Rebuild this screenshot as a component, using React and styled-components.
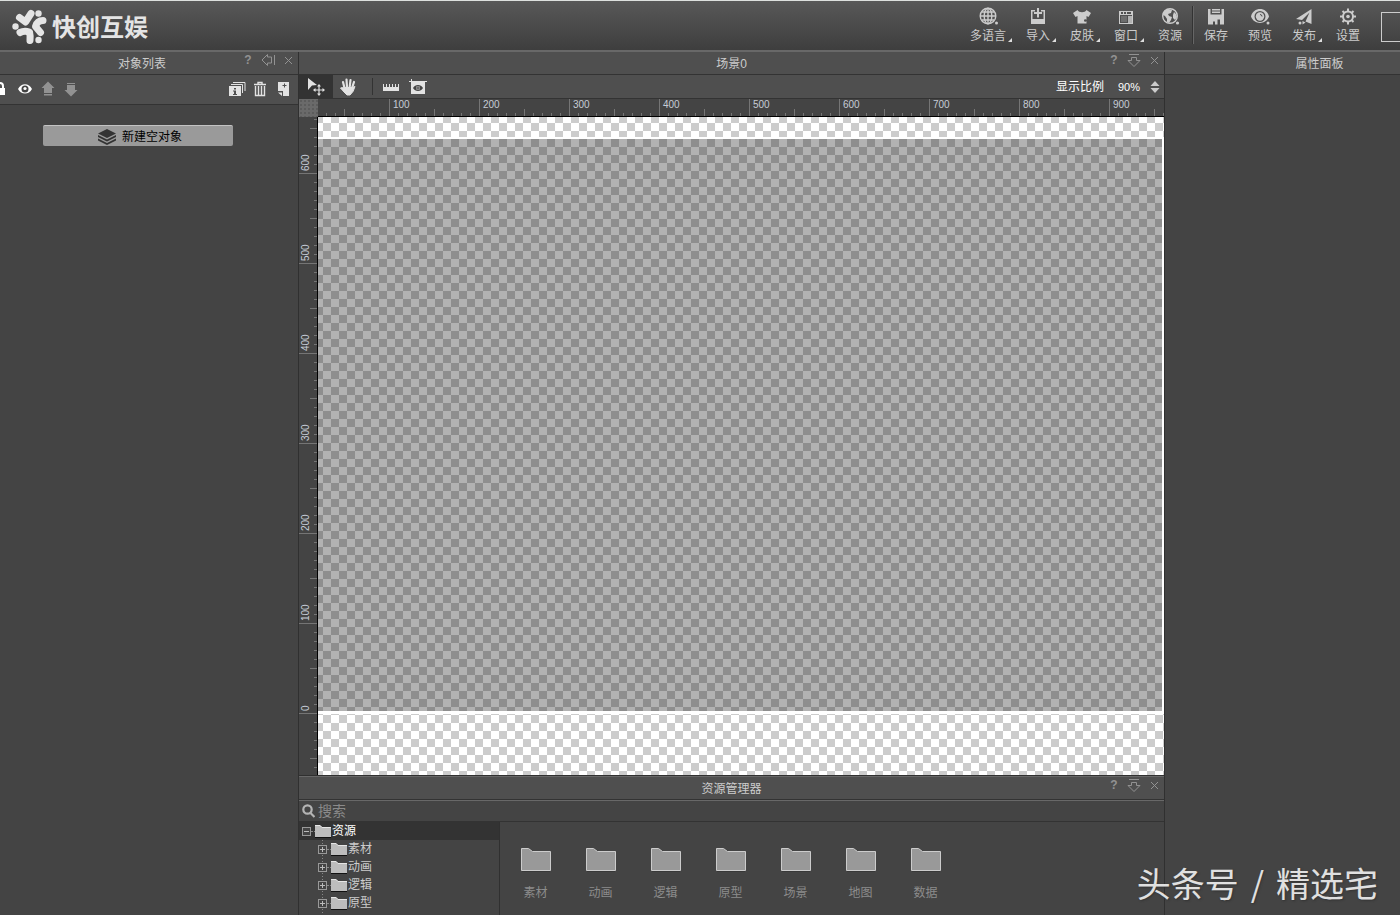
import React, { useState } from "react";
import styled, { createGlobalStyle } from "styled-components";

const GlobalStyle = createGlobalStyle`
  * {
    box-sizing: border-box;
  }

  body {
    margin: 0;
    background: #444;
    color: #ccc;
    font-family: "Liberation Sans", "Noto Sans CJK SC", sans-serif;
    font-size: 12px;
    line-height: 16px;
  }

  button, input {
    font: inherit;
    color: inherit;
    background: none;
    border: 0;
    padding: 0;
  }

  button {
    cursor: pointer;
  }

  svg {
    display: block;
  }
`;

const Page = styled.div`
  position: relative;
  display: flex;
  flex-direction: column;
  height: 100vh;
  overflow: hidden;
`;

const Header = styled.header`
  display: flex;
  justify-content: space-between;
  flex: none;
  height: 52px;
  border-top: 1px solid #dde0de;
  border-bottom: 2px solid #686868;
  background: linear-gradient(#585858, #3e3e3e);
`;

const Brand = styled.h1`
  display: flex;
  align-items: center;
  gap: 3px;
  margin: 0;
  padding-left: 11px;
  color: #e4e4e4;
  font-family: "Noto Sans CJK SC", sans-serif;
  font-size: 24px;
  font-weight: 700;
  line-height: 28px;
`;

const Tools = styled.nav`
  display: flex;
`;

const ToolButton = styled.button`
  display: flex;
  flex-direction: column;
  align-items: center;
  gap: 1px;
  width: ${({ $wide }) => ($wide ? 56 : 44)}px;
  padding-top: 6px;
`;

const ToolLabel = styled.span`
  position: relative;

  &::after {
    content: "";
    display: ${({ $menu }) => ($menu ? "block" : "none")};
    position: absolute;
    right: -6px;
    bottom: 2px;
    border: 2px solid transparent;
    border-right-color: #ddd;
    border-bottom-color: #ddd;
  }
`;

const ToolDivider = styled.span`
  width: 2px;
  margin: 5px 0 6px;
  border-left: 1px solid #333;
  border-right: 1px solid #666;
`;

const ToolBox = styled.span`
  width: 19px;
  height: 30px;
  margin: 11px 0 0 11px;
  border: 1px solid #ccc;
  border-right: 0;
`;

const Workspace = styled.div`
  display: flex;
  flex: 1;
  min-height: 0;
`;

const Side = styled.aside`
  flex: none;
  width: ${({ $width }) => $width}px;
`;

const Center = styled.main`
  display: flex;
  flex-direction: column;
  flex: 1;
  min-width: 0;
  border-left: 1px solid #303030;
  border-right: 1px solid #303030;
`;

const TitleBar = styled.div`
  display: grid;
  grid-template-columns: minmax(0, 1fr) auto minmax(0, 1fr);
  align-items: center;
  flex: none;
  height: 23px;
  border-bottom: 1px solid #333;
  background: #4f4f4f;
`;

const Title = styled.h2`
  grid-column: 2;
  margin: 0 ${({ $right }) => $right || 0}px 0 ${({ $left }) => $left || 0}px;
  padding-top: 2px;
  font-size: 12px;
  font-weight: 400;
  line-height: 16px;
`;

const TitleActions = styled.div`
  display: flex;
  justify-self: end;
  padding-bottom: 6px;
  color: #929292;

  button {
    display: flex;
    align-items: center;
    justify-content: center;
    width: 20px;
    height: 16px;
  }
`;

const Bar = styled.div`
  display: flex;
  align-items: stretch;
  flex: none;
  height: ${({ $height }) => $height}px;
  border-bottom: 1px solid #333;
  background: #4f4f4f;
  color: #e2e2e2;
`;

const ObjectTools = styled(Bar)`
  overflow: hidden;
  padding: 0 4px 1px 0;
`;

const IconButton = styled.button`
  display: flex;
  flex: none;
  align-items: center;
  justify-content: center;
  width: ${({ $width }) => $width || 23}px;
  background: ${({ $active }) => ($active ? "#333" : "none")};
  color: ${({ $muted }) => ($muted ? "#929292" : "inherit")};

  &:first-child {
    margin-left: ${({ $cut }) => ($cut ? -10 : 0)}px;
  }
`;

const Spacer = styled.span`
  flex: 1;
`;

const BarDivider = styled.span`
  width: 1px;
  margin: 3px 4px 3px 9px;
  background: #333;
`;

const ZoomField = styled.div`
  display: flex;
  align-items: center;
  color: #fff;

  input {
    width: 32px;
    margin-left: 14px;
    font-size: 11px;
  }
`;

const Stepper = styled.div`
  display: flex;
  flex-direction: column;
  gap: 2px;
  width: 14px;
  padding-right: 4px;
`;

const ObjectList = styled.div`
  display: flex;
  justify-content: center;
  padding: 20px 22px 20px 0;
`;

const NewObject = styled.button`
  display: flex;
  align-items: center;
  justify-content: center;
  gap: 6px;
  width: 190px;
  height: 21px;
  padding: 1px 0 0 4px;
  border-top: 1px solid #c4c4c4;
  border-radius: 2px;
  background: #9a9a9a;
  color: #000;
`;

const Stage = styled.section`
  display: grid;
  grid-template-columns: 19px minmax(0, 1fr);
  grid-template-rows: 18px minmax(0, 1fr);
  flex: 1;
  min-height: 0;
  color: #c6ccd6;
  font-size: 10px;
  line-height: 12px;
`;

const Corner = styled.div`
  background: radial-gradient(#5c5c5c 1px, transparent 1px) 0 0 / 4px 4px #6a6a6a;
`;

const RulerTop = styled.div`
  display: flex;
  overflow: hidden;
  padding-left: 71px;
  border-bottom: 1px solid #000;
  background:
    linear-gradient(90deg, #757575 1px, transparent 1px) 8px 100% / 9px 3px repeat-x,
    linear-gradient(90deg, #757575 1px, transparent 1px) 26px 100% / 90px 7px repeat-x,
    #444;

  span {
    flex: none;
    width: 90px;
    padding-left: 3px;
    border-left: 1px solid #757575;
  }
`;

const RulerLeft = styled.div`
  overflow: hidden;
  border-right: 1px solid #000;
  background:
    linear-gradient(#757575 1px, transparent 1px) 100% 2px / 3px 9px repeat-y,
    linear-gradient(#757575 1px, transparent 1px) 100% 11px / 7px 90px repeat-y,
    #444;

  span {
    display: block;
    width: 100%;
    height: 90px;
    padding: 2px 1px 0 0;
    border-top: 1px solid #757575;
    writing-mode: vertical-rl;
    transform: rotate(180deg);
  }

  span:first-child {
    margin-top: -33px;
  }
`;

const Canvas = styled.div`
  display: flex;
  padding: 20px 0 61px;
  background: conic-gradient(#ccc 25%, #fff 0 50%, #ccc 0 75%, #fff 0) 5px -2px / 16px 16px;
`;

const Scene = styled.div`
  flex: 1;
  border: solid #fff;
  border-width: 2px 2px 3px 0;
  background: rgba(0, 0, 0, 0.3);
  background-clip: padding-box;
`;

const Resources = styled.section`
  display: flex;
  flex-direction: column;
  flex: none;
  height: 140px;
  border-top: 1px solid #303030;

  ${TitleBar} {
    height: 24px;
    border-top: 1px solid #686868;
  }
`;

const Search = styled.label`
  display: flex;
  align-items: center;
  gap: 3px;
  flex: none;
  height: 22px;
  padding-left: 3px;
  border-top: 1px solid #686868;
  border-bottom: 1px solid #333;
  color: #b4b4b4;

  input {
    width: 180px;
    font-size: 14px;
    line-height: 18px;
    outline: 0;
  }

  input::placeholder {
    color: #8a8a8a;
  }
`;

const Browser = styled.div`
  display: flex;
  flex: 1;
  min-height: 0;
`;

const Tree = styled.ul`
  width: 201px;
  margin: 0;
  padding: 0;
  overflow: hidden;
  border-right: 1px solid #303030;
  list-style: none;

  ul {
    height: 90px;
    margin: 0;
    padding: 0 0 0 16px;
    background: repeating-linear-gradient(#888 0 1px, transparent 1px 3px) 23px 0 / 1px 100% no-repeat;
    list-style: none;
  }
`;

const TreeRow = styled.div`
  display: flex;
  align-items: center;
  height: 18px;
  padding-left: 3px;
  background: ${({ $selected }) => ($selected ? "#333" : "none")};
  color: ${({ $selected }) => ($selected ? "#fff" : "#ccc")};
`;

const Toggle = styled.button`
  width: 9px;
  height: 9px;
  border: 1px solid #999;
  background:
    linear-gradient(#bbb, #bbb) 50% 50% / 5px 1px no-repeat,
    linear-gradient(#bbb, #bbb) 50% 50% / 1px ${({ $open }) => ($open ? 0 : 5)}px no-repeat,
    #444;
`;

const Branch = styled.span`
  width: 4px;
  border-top: 1px dotted #888;
`;

const Files = styled.div`
  display: flex;
  flex: 1;
  min-width: 0;
  padding: 25px 0 0 3px;
`;

const File = styled.button`
  display: flex;
  flex-direction: column;
  align-items: center;
  gap: 13px;
  flex: none;
  width: 65px;
  color: #8c8c8c;
`;

const Watermark = styled.div`
  position: absolute;
  right: 22px;
  bottom: 12px;
  display: flex;
  gap: 12px;
  color: #e0e0e0;
  font-family: "Noto Sans CJK SC", sans-serif;
  font-size: 34px;
  line-height: 40px;
  text-shadow: 1px 1px 2px #333;
  white-space: nowrap;
  pointer-events: none;
`;

const Logo = () => (
  <svg width="38" height="38" viewBox="11 6 38 38" fill="none" stroke="currentColor" strokeWidth="7" strokeLinecap="round" strokeLinejoin="round">
    <path d="M19.500 16.500l6 4.500L31 12.500M43 19.500c-4 0-6.500 2.500-7.500 6l5 6M20 31.500c3-1.500 6-1.500 9.500-.5.800 3 .8 5.500.5 8.500" />
    <g fill="currentColor" stroke="none">
      <circle cx="38.500" cy="12.500" r="3.200" />
      <circle cx="15.500" cy="25.500" r="3.200" />
      <circle cx="38.500" cy="39" r="3.200" />
    </g>
  </svg>
);

const toolIcons = {
  globe: (
    <>
      <g fill="none" stroke="currentColor" strokeWidth="1.400">
        <circle cx="10" cy="9" r="7.800" />
        <ellipse cx="10" cy="9" rx="3.800" ry="7.800" />
        <path d="M10 1.500v15M2.500 9h15M4 5h12M4 13h12" />
      </g>
      <circle cx="18.500" cy="16" r="1.500" />
    </>
  ),
  import: (
    <path d="M3 3h4v1.500H4.500V12h11V4.500H13V3h4v14H3zM9 1h2v4h3v2h-3v3.500H9V7H6V5h3z" />
  ),
  skin: (
    <path d="M5.500 3c1.500 3 7.500 3 9 0L19 6l-2.500 4-2-1v7.500h-9V9l-2 1L1 6zM12 13.500a1.300 1.300 0 1 0 2.600 0 1.300 1.300 0 0 0-2.600 0" fillRule="evenodd" />
  ),
  window: (
    <>
      <path d="M3 4h14v13H3zM4 8v8h12V8zM5 5v2h2V5zM8 5v2h2V5zM11 5v2h4V5z" fillRule="evenodd" />
      <path d="M5 9h6v6H5z" opacity="0.25" />
      <path d="M12 9h4v7h-4z" opacity="0.8" />
    </>
  ),
  earth: (
    <>
      <circle cx="10" cy="9" r="7.300" fill="none" stroke="currentColor" strokeWidth="1.400" />
      <path d="M4 4l4-2 4 1-1 3-3 1 1 2 3 1-1 3-2 3-2-1V12L5 9 3 8zM14 5l2 2 1 3-2 3-2-2V8z" />
      <circle cx="17.500" cy="16" r="1.600" />
    </>
  ),
  save: (
    <path d="M2 2h2.500v5.500h11V2H18v15.500h-4v-5h-2.500v5H9v-3H7v3H2zM6 2h8v1.500H6zM6 4.500h8V6H6z" fillRule="evenodd" />
  ),
  preview: (
    <>
      <path d="M1 9.500c2-10 16-10 18 0-3 8.500-15 8.500-18 0zm3.500 0a5.500 5.500 0 1 0 11 0 5.500 5.500 0 1 0-11 0" fillRule="evenodd" />
      <circle cx="10" cy="9.500" r="4.200" />
      <path d="M10 7.500a2 2 0 0 1 2 2" fill="none" stroke="#4d4d4d" />
      <circle cx="18" cy="16" r="1.500" />
    </>
  ),
  publish: (
    <>
      <path d="M17.500 2v15l-6-2.500L15.500 5.500 8 13 2 12z" />
      <circle cx="6" cy="16" r="1.500" />
      <path d="M8.500 14l3 1.500-3 2z" />
    </>
  ),
  settings: (
    <>
      <g fill="none" stroke="currentColor">
        <circle cx="10" cy="9.500" r="5" strokeWidth="2" />
        <path d="M10 1.500v3M10 14.500v3M2 9.500h3M15 9.500h3M4.500 4l2 2M13.500 13l2 2M4.500 15l2-2M13.500 6l2-2" strokeWidth="2" />
      </g>
      <circle cx="10" cy="9.500" r="1.800" />
    </>
  ),
};

const Eye = () => (
  <svg width="16" height="16" viewBox="0 0 16 16" fill="#fff">
    <path d="M1 8c3-6.500 11-6.500 14 0-3 6-11 6-14 0z" />
    <circle cx="8" cy="8" r="3.500" fill="#444" />
    <circle cx="8" cy="7.500" r="1.600" />
  </svg>
);

const Arrow = ({ down }) => (
  <svg width="14" height="16" viewBox="0 0 14 16" fill="currentColor">
    <path d={down ? "M3 2h8v1H3zM3 4h8v5h2.500L7 15.500.5 9H3z" : "M7 .5L13.500 7H11v5H3V7H.5zM3 13h8v1.500H3z"} />
  </svg>
);

const Lock = () => (
  <svg width="16" height="16" viewBox="0 0 16 16" fill="#fff">
    <path d="M1 7h1V5a4 4 0 0 1 8 0v2h1v7H1zm3 0h4V5a2 2 0 0 0-4 0z" fillRule="evenodd" />
  </svg>
);

const Details = () => (
  <svg width="18" height="16" viewBox="0 0 18 16" fill="currentColor">
    <path d="M1 5h12v10H1zM6 7v1.500h2V7zM5 9.500v1h1V13H5v1h4v-1H8V9.500z" fillRule="evenodd" />
    <path d="M3 3.500h11.500V12M5 1.500h12V10" fill="none" stroke="currentColor" />
  </svg>
);

const Trash = () => (
  <svg width="14" height="16" viewBox="0 0 14 16" fill="none" stroke="currentColor">
    <path d="M1 3.500h12M5 3V1.500h4V3M2.500 5v9.500h9V5M5.500 5v9M8.500 5v9" strokeWidth="1.400" />
  </svg>
);

const NewDoc = () => (
  <svg width="14" height="16" viewBox="0 0 14 16" fill="currentColor">
    <path d="M2 1h11v14H7v-5H2zM8 2.500V4H6.500v1H8v1.500h1V5h1.500V4H9V2.500zM2 11.500h4V15z" fillRule="evenodd" />
  </svg>
);

const Layers = () => (
  <svg width="18" height="16" viewBox="0 0 18 16" fill="#333">
    <path d="M9 0l9 4.500L9 9 0 4.500zM0 6l9 4.500L18 6v2L9 12.500 0 8zM0 9.500L9 14l9-4.500v2L9 16l-9-4.500z" />
  </svg>
);

const MoveCursor = () => (
  <svg width="20" height="18" viewBox="0 0 20 18" fill="currentColor">
    <path d="M2 0l9 7-5 .5L2 12z" />
    <path d="M13 6l2 2.500h-1.400v2.900h2.900V10l2.500 2-2.500 2v-1.400h-2.900v2.900H15L13 18l-2-2.500h1.400v-2.900H9.500V14L7 12l2.500-2v1.400h2.900V8.500H11z" />
  </svg>
);

const Hand = () => (
  <svg width="18" height="18" viewBox="0 0 18 18" fill="none" stroke="currentColor" strokeLinecap="round">
    <path d="M5.500 10L4 4M8 9l-.5-7.500M10.700 9l.8-7M13 10l2-6" strokeWidth="2.200" />
    <path d="M5 9.500h8.500l2.500-1-2 5-3 3.500H8l-3-3-3.500-4 2-.5 2 1.500z" fill="currentColor" />
  </svg>
);

const RulerIcon = () => (
  <svg width="16" height="8" viewBox="0 0 16 8" fill="currentColor">
    <path d="M0 1h1v3h2V1h1v3h2V1h1v3h2V1h1v3h2V1h1v3h2V1h1v7H0z" />
  </svg>
);

const ViewFrame = () => (
  <svg width="18" height="16" viewBox="0 0 18 16" fill="currentColor">
    <path d="M2 0h1v2h15v1h-2v12H2V3H0V2h2z" />
    <path d="M4 9c2-4 8-4 10 0-2 4-8 4-10 0z" fill="#444" />
    <circle cx="9" cy="9" r="2" />
    <path d="M9 7v4M7 9h4" stroke="#444" />
  </svg>
);

const SearchIcon = () => (
  <svg width="13" height="14" viewBox="0 0 13 14" fill="none" stroke="currentColor" strokeWidth="2.200">
    <circle cx="5.500" cy="5.500" r="4.200" />
    <path d="M8.500 9l4 4" />
  </svg>
);

const SmallFolder = () => (
  <svg width="17" height="14" viewBox="0 0 17 14">
    <path d="M0 13.500h16" stroke="#111" />
    <path d="M0 1h5l2 2h9v10H0z" fill="#bdbdbd" />
    <path d="M0 1.500h5l2 2h9" fill="none" stroke="#e6e6e6" />
  </svg>
);

const BigFolder = () => (
  <svg width="30" height="25" viewBox="0 0 30 25">
    <path d="M1 24.500h28" stroke="#383838" />
    <path d="M.5 1.500h7l4 3h18v19H.5z" fill="#999" stroke="#ccc" />
  </svg>
);

const CloseIcon = () => (
  <svg width="9" height="9" viewBox="0 0 9 9" stroke="currentColor">
    <path d="M1 1l7 7M8 1L1 8" />
  </svg>
);

const DockIcon = ({ left }) => (
  <svg width="14" height="14" viewBox="0 0 14 14" fill="none" stroke="currentColor">
    <path d={left ? "M13.500 2v10M6.500 4V1.500L1 7l5.500 5.500V10h4V4z" : "M2 1.500h10M4.500 4.500h5v3H13l-6 6-6-6h3.500z"} />
  </svg>
);

const PanelActions = ({ left }) => (
  <TitleActions>
    <button aria-label="help">
      <b>?</b>
    </button>
    <button aria-label="dock">
      <DockIcon left={left} />
    </button>
    <button aria-label="close">
      <CloseIcon />
    </button>
  </TitleActions>
);

const Tool = ({ icon, label, menu, wide }) => (
  <ToolButton $wide={wide}>
    <svg width="20" height="20" viewBox="0 0 20 20" fill="currentColor">
      {toolIcons[icon]}
    </svg>
    <ToolLabel $menu={menu}>{label}</ToolLabel>
  </ToolButton>
);

const topMarks = [100, 200, 300, 400, 500, 600, 700, 800, 900];
const leftMarks = [600, 500, 400, 300, 200, 100, 0];
const folders = ["素材", "动画", "逻辑", "原型", "场景", "地图", "数据"];

const App = () => {
  const [zoom, setZoom] = useState(90);
  const [query, setQuery] = useState("");

  return (
    <Page>
      <GlobalStyle />
      <Header>
        <Brand>
          <Logo />
          快创互娱
        </Brand>
        <Tools>
          <Tool icon="globe" label="多语言" menu wide />
          <Tool icon="import" label="导入" menu />
          <Tool icon="skin" label="皮肤" menu />
          <Tool icon="window" label="窗口" menu />
          <Tool icon="earth" label="资源" />
          <ToolDivider />
          <Tool icon="save" label="保存" />
          <Tool icon="preview" label="预览" />
          <Tool icon="publish" label="发布" menu />
          <Tool icon="settings" label="设置" />
          <ToolBox />
        </Tools>
      </Header>

      <Workspace>
        <Side $width={298}>
          <TitleBar>
            <Title $right={14}>对象列表</Title>
            <PanelActions left />
          </TitleBar>
          <ObjectTools $height={30}>
            <IconButton $cut aria-label="lock"><Lock /></IconButton>
            <IconButton aria-label="visible"><Eye /></IconButton>
            <IconButton $muted aria-label="up"><Arrow /></IconButton>
            <IconButton $muted aria-label="down"><Arrow down /></IconButton>
            <Spacer />
            <IconButton aria-label="details"><Details /></IconButton>
            <IconButton aria-label="delete"><Trash /></IconButton>
            <IconButton aria-label="new"><NewDoc /></IconButton>
          </ObjectTools>
          <ObjectList>
            <NewObject>
              <Layers />
              新建空对象
            </NewObject>
          </ObjectList>
        </Side>

        <Center>
          <TitleBar>
            <Title>场景0</Title>
            <PanelActions />
          </TitleBar>
          <Bar $height={24}>
            <IconButton $width={34} $active aria-label="move"><MoveCursor /></IconButton>
            <IconButton $width={30} aria-label="pan"><Hand /></IconButton>
            <BarDivider />
            <IconButton $width={28} aria-label="ruler"><RulerIcon /></IconButton>
            <IconButton $width={26} aria-label="view"><ViewFrame /></IconButton>
            <Spacer />
            <ZoomField>
              <label htmlFor="zoom">显示比例</label>
              <input
                id="zoom"
                value={`${zoom}%`}
                onChange={(e) => setZoom(parseInt(e.target.value, 10) || 0)}
              />
              <Stepper>
                <button aria-label="zoom in" onClick={() => setZoom(zoom + 10)}>
                  <svg width="10" height="5" viewBox="0 0 10 5"><path d="M5 0l4.500 5h-9z" fill="#ccc" /></svg>
                </button>
                <button aria-label="zoom out" onClick={() => setZoom(zoom - 10)}>
                  <svg width="10" height="5" viewBox="0 0 10 5"><path d="M.5 0h9L5 5z" fill="#ccc" /></svg>
                </button>
              </Stepper>
            </ZoomField>
          </Bar>
          <Stage>
            <Corner />
            <RulerTop>
              {topMarks.map((mark) => (
                <span key={mark}>{mark}</span>
              ))}
            </RulerTop>
            <RulerLeft>
              {leftMarks.map((mark) => (
                <span key={mark}>{mark}</span>
              ))}
            </RulerLeft>
            <Canvas>
              <Scene />
            </Canvas>
          </Stage>
          <Resources>
            <TitleBar>
              <Title>资源管理器</Title>
              <PanelActions />
            </TitleBar>
            <Search>
              <SearchIcon />
              <input
                aria-label="搜索"
                placeholder="搜索"
                value={query}
                onChange={(e) => setQuery(e.target.value)}
              />
            </Search>
            <Browser>
              <Tree>
                <li>
                  <TreeRow $selected>
                    <Toggle $open aria-label="collapse" />
                    <Branch />
                    <SmallFolder />
                    资源
                  </TreeRow>
                  <ul>
                    {folders.slice(0, 4).map((name) => (
                      <li key={name}>
                        <TreeRow>
                          <Toggle aria-label="expand" />
                          <Branch />
                          <SmallFolder />
                          {name}
                        </TreeRow>
                      </li>
                    ))}
                  </ul>
                </li>
              </Tree>
              <Files>
                {folders.map((name) => (
                  <File key={name}>
                    <BigFolder />
                    {name}
                  </File>
                ))}
              </Files>
            </Browser>
          </Resources>
        </Center>

        <Side $width={235}>
          <TitleBar>
            <Title $left={74}>属性面板</Title>
          </TitleBar>
        </Side>
      </Workspace>
      <Watermark>
        <span>头条号</span>
        <span>/</span>
        <span>精选宅</span>
      </Watermark>
    </Page>
  );
};

export default App;
